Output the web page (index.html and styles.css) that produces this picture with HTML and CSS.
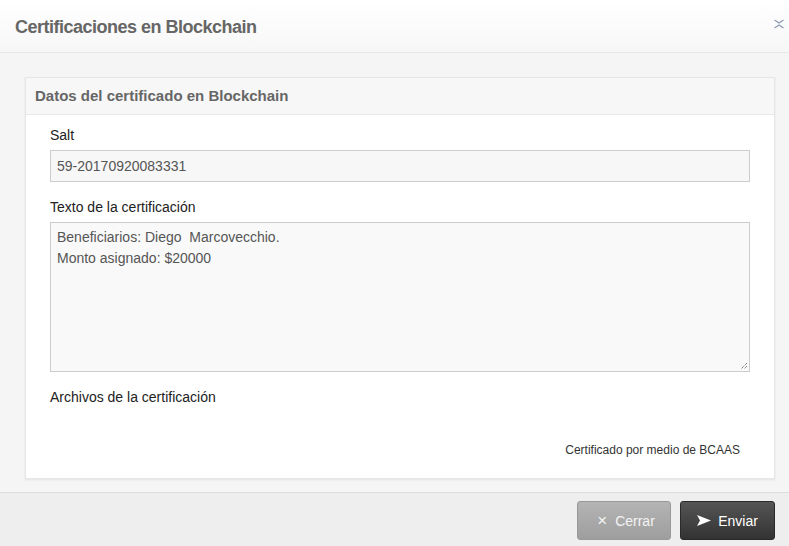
FILE: index.html
```html
<!DOCTYPE html>
<html lang="es">
<head>
<meta charset="utf-8">
<title>Certificaciones en Blockchain</title>
<link rel="stylesheet" href="styles.css">
</head>
<body>
<div class="modal">
  <header class="modal-header">
    <h1 class="modal-title">Certificaciones en Blockchain</h1>
    <button class="close-btn" aria-label="Cerrar">
      <svg width="12" height="10" viewBox="0 0 12 10"><path d="M1.5 1 L6 4 L10.5 1 M1.5 9 L6 6 L10.5 9" fill="none" stroke="#8b9bb0" stroke-width="1.2"/></svg>
    </button>
  </header>
  <main class="modal-body">
    <section class="panel">
      <div class="panel-heading">Datos del certificado en Blockchain</div>
      <div class="panel-body">
        <div class="field">
          <label class="label">Salt</label>
          <div class="input">59-20170920083331</div>
        </div>
        <div class="field">
          <label class="label">Texto de la certificación</label>
          <div class="textarea">Beneficiarios: Diego&nbsp; Marcovecchio.<br>Monto asignado: $20000
            <svg class="grip" width="8" height="8" viewBox="0 0 8 8"><path d="M7 1 L1 7 M7 4 L4 7" stroke="#555" stroke-width="1" fill="none" stroke-dasharray="1 1"/></svg>
          </div>
        </div>
        <div class="field">
          <label class="label">Archivos de la certificación</label>
        </div>
        <p class="note">Certificado por medio de BCAAS</p>
      </div>
    </section>
  </main>
  <footer class="modal-footer">
    <button class="btn btn-close"><span class="x">×</span>Cerrar</button>
    <button class="btn btn-send">
      <svg width="14" height="11" viewBox="0 0 14 11"><path d="M0 0 L14 5.5 L0 11 L3 5.5 Z" fill="#fff"/></svg>Enviar</button>
  </footer>
</div>
</body>
</html>
```
FILE: styles.css
```css
* { box-sizing: border-box; }
html, body { margin: 0; padding: 0; }
body {
  width: 789px;
  height: 546px;
  overflow: hidden;
  font-family: "Liberation Sans", Arial, sans-serif;
  background: #f5f5f5;
}
.modal {
  display: flex;
  flex-direction: column;
  height: 546px;
}
.modal-header {
  height: 53px;
  display: flex;
  align-items: center;
  justify-content: space-between;
  padding: 0 4px 0 15px;
  background: linear-gradient(#ffffff, #f7f7f7);
  border-bottom: 1px solid #e8e8e8;
}
.modal-title {
  margin: 0;
  font-size: 18px;
  font-weight: bold;
  color: #666;
  letter-spacing: -0.5px;
  padding-top: 2px;
}
.close-btn {
  border: 0;
  background: none;
  padding: 0;
  width: 12px;
  height: 10px;
  display: flex;
  margin-bottom: 4px;
}
.modal-body {
  flex: 1;
  padding: 24px 14px 0 25px;
  background: #f5f5f5;
}
.panel {
  background: #fff;
  border: 1px solid #e6e6e6;
  box-shadow: 0 1px 2px rgba(0,0,0,0.08);
  height: 402px;
}
.panel-heading {
  height: 37px;
  background: #f7f7f7;
  border-bottom: 1px solid #e8e8e8;
  padding: 9px 9px 0;
  font-size: 15px;
  font-weight: bold;
  color: #666;
}
.panel-body {
  padding: 12px 24px 0 24px;
}
.field { margin-bottom: 17px; }
.label {
  display: block;
  font-size: 14px;
  color: #222;
  margin-bottom: 7px;
}
.input {
  height: 32px;
  background: #f7f7f7;
  border: 1px solid #ccc;
  padding: 7px 6px;
  font-size: 14px;
  color: #555;
}
.textarea {
  position: relative;
  height: 150px;
  background: #f9f9f9;
  border: 1px solid #ccc;
  padding: 4px 6px;
  font-size: 14px;
  line-height: 21px;
  color: #555;
}
.grip { position: absolute; right: 1px; bottom: 1px; }
.note {
  margin: 38px 10px 0 0;
  text-align: right;
  font-size: 12px;
  color: #333;
}
.modal-footer {
  height: 54px;
  background: #eee;
  border-top: 1px solid #ddd;
  display: flex;
  justify-content: flex-end;
  align-items: flex-start;
  gap: 9px;
  padding: 8px 14px 0 0;
}
.btn {
  height: 39px;
  width: 95px;
  border-radius: 3px;
  font-family: "Liberation Sans", Arial, sans-serif;
  font-size: 14px;
  color: #fff;
  display: flex;
  align-items: center;
  justify-content: center;
  gap: 8px;
  padding: 0;
}
.btn-close {
  width: 94px;
  background: linear-gradient(#b4b4b4, #9e9e9e);
  border: 1px solid #999;
  color: #f4f4f4;
  padding-left: 4px;
}
.x { font-size: 17px; line-height: 1; }
.btn-send {
  background: linear-gradient(#555, #333);
  border: 1px solid #2a2a2a;
  gap: 7px;
}
```
